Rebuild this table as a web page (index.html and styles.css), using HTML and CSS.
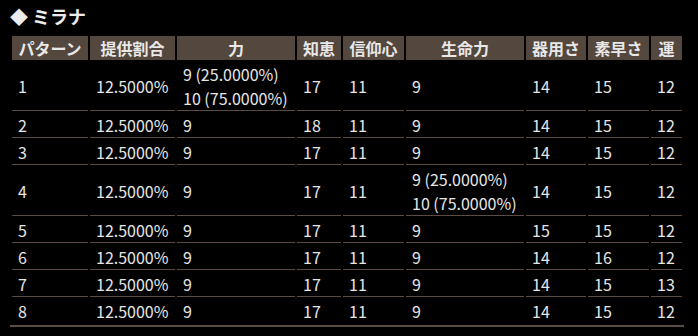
FILE: index.html
```html
<!DOCTYPE html>
<html lang="ja">
<head>
<meta charset="utf-8">
<link rel="stylesheet" href="styles.css">
</head>
<body>
<div class="page">
  <h2 class="title">◆ ミラナ</h2>
  <table class="stats">
    <thead>
      <tr>
        <th class="c-pat">パターン</th>
        <th class="c-rate">提供割合</th>
        <th class="c-str">力</th>
        <th class="c-int">知恵</th>
        <th class="c-fai">信仰心</th>
        <th class="c-vit">生命力</th>
        <th class="c-dex">器用さ</th>
        <th class="c-agi">素早さ</th>
        <th class="c-luk">運</th>
      </tr>
    </thead>
    <tbody>
      <tr><td>1</td><td>12.5000%</td><td>9 (25.0000%)<br>10 (75.0000%)</td><td>17</td><td>11</td><td>9</td><td>14</td><td>15</td><td>12</td></tr>
      <tr><td>2</td><td>12.5000%</td><td>9</td><td>18</td><td>11</td><td>9</td><td>14</td><td>15</td><td>12</td></tr>
      <tr><td>3</td><td>12.5000%</td><td>9</td><td>17</td><td>11</td><td>9</td><td>14</td><td>15</td><td>12</td></tr>
      <tr><td>4</td><td>12.5000%</td><td>9</td><td>17</td><td>11</td><td>9 (25.0000%)<br>10 (75.0000%)</td><td>14</td><td>15</td><td>12</td></tr>
      <tr><td>5</td><td>12.5000%</td><td>9</td><td>17</td><td>11</td><td>9</td><td>15</td><td>15</td><td>12</td></tr>
      <tr><td>6</td><td>12.5000%</td><td>9</td><td>17</td><td>11</td><td>9</td><td>14</td><td>16</td><td>12</td></tr>
      <tr><td>7</td><td>12.5000%</td><td>9</td><td>17</td><td>11</td><td>9</td><td>14</td><td>15</td><td>13</td></tr>
      <tr class="last"><td>8</td><td>12.5000%</td><td>9</td><td>17</td><td>11</td><td>9</td><td>14</td><td>15</td><td>12</td></tr>
    </tbody>
  </table>
</div>
</body>
</html>
```
FILE: styles.css
```css
html, body {
  margin: 0;
  background: #000;
}
body {
  font-family: "Noto Sans CJK JP", "Noto Sans", sans-serif;
  color: #e6e6e6;
}
.page {
  padding: 4px 10px 0 10px;
}
.title {
  margin: 0 0 6px 0;
  font-size: 18px;
  line-height: 24px;
  font-weight: bold;
  color: #ececec;
}
.stats {
  border-collapse: separate;
  border-spacing: 2px;
  border-bottom: 2px solid #5b4c43;
  font-size: 16px;
  line-height: 24px;
}
.stats th {
  background: #54473e;
  color: #e8e8e8;
  font-weight: bold;
  padding: 0 6px;
  text-align: center;
  white-space: nowrap;
}
.stats td {
  padding: 0 6px;
  text-align: left;
  white-space: nowrap;
  border-bottom: 1px solid #5b4c43;
}
.stats tr.last td {
  border-bottom: none;
}
.c-pat { width: 64px; }
.c-rate { width: 73px; }
.c-str { width: 106px; }
.c-int { width: 32px; }
.c-fai { width: 49px; }
.c-vit { width: 106px; }
.c-dex { width: 48px; }
.c-agi { width: 49px; }
.c-luk { width: 19px; }
```
